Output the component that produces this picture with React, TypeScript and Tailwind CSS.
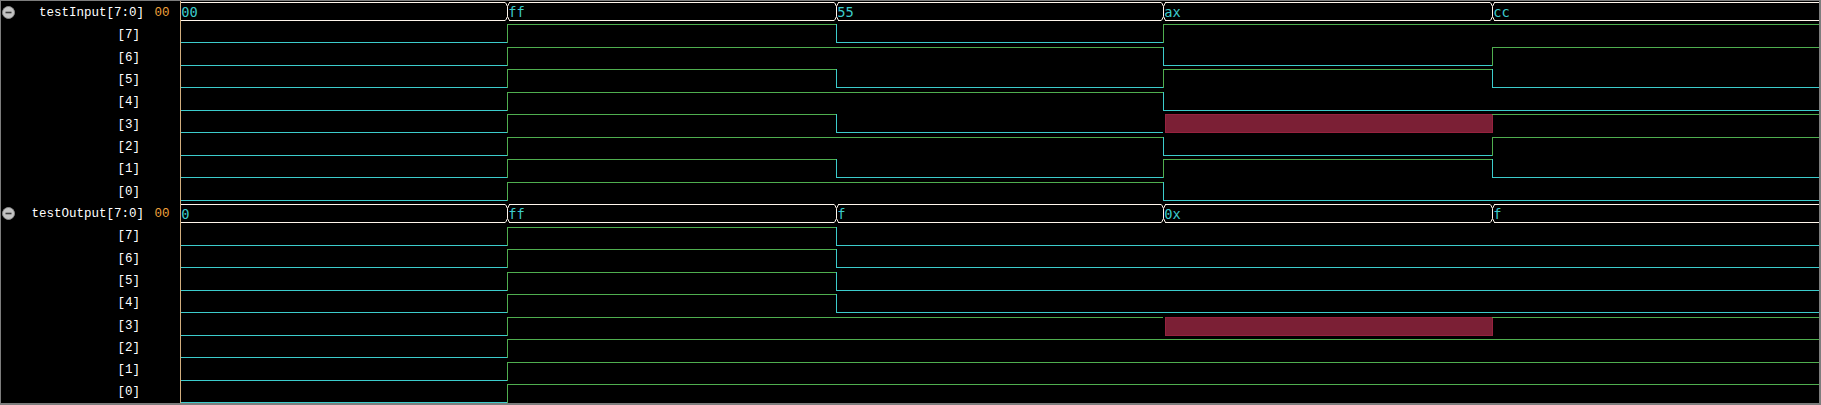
import React from "react";

type Bit = 0 | 1 | "x";

interface Signal {
  name: string;
  value: string;
  labels: string[];
  bits: Bit[][]; // per segment, bit7..bit0
}

// pixel columns where the value changes, and the visible wave span
const CHANGES = [507, 836, 1163, 1492];
const LEFT = 181;
const RIGHT = 1819;
const EDGES = [LEFT, ...CHANGES, RIGHT];

const HIGH = "#4fae4f";
const LOW = "#3ccccc";
const BUS = "#fff6ec";

const hi = (r: number) => Math.round(1.5 + 22.5 * r);
const lo = (r: number) => Math.round(19.5 + 22.5 * r);

const signals: Signal[] = [
  {
    name: "testInput[7:0]",
    value: "00",
    labels: ["00", "ff", "55", "ax", "cc"],
    bits: [
      [0, 0, 0, 0, 0, 0, 0, 0],
      [1, 1, 1, 1, 1, 1, 1, 1],
      [0, 1, 0, 1, 0, 1, 0, 1],
      [1, 0, 1, 0, "x", 0, 1, 0],
      [1, 1, 0, 0, 1, 1, 0, 0],
    ],
  },
  {
    name: "testOutput[7:0]",
    value: "00",
    labels: ["0", "ff", "f", "0x", "f"],
    bits: [
      [0, 0, 0, 0, 0, 0, 0, 0],
      [1, 1, 1, 1, 1, 1, 1, 1],
      [0, 0, 0, 0, 1, 1, 1, 1],
      [0, 0, 0, 0, "x", 1, 1, 1],
      [0, 0, 0, 0, 1, 1, 1, 1],
    ],
  },
];

const BusWave = ({ row, labels }: { row: number; labels: string[] }) => {
  const t = hi(row) + 0.5;
  const b = lo(row) + 0.5;
  return (
    <g>
      {EDGES.slice(0, -1).map((start, i) => {
        const end = EDGES[i + 1];
        const x0 = i === 0 ? start : start + 2;
        const x1 = i === EDGES.length - 2 ? end : end - 2;
        return (
          <g key={i}>
            <line x1={x0} y1={t} x2={x1} y2={t} stroke={BUS} />
            <line x1={x0} y1={b} x2={x1} y2={b} stroke={BUS} />
            <text
              x={i === 0 ? start + 0.3 : start + 1.2}
              y={hi(row) + 14.8}
              className="font-['DejaVu_Sans_Mono',monospace] text-[13.7px] fill-[#3ccccc]"
            >
              {labels[i]}
            </text>
          </g>
        );
      })}
      {CHANGES.map((c) => {
        const x = c + 0.5;
        return (
          <path
            key={c}
            d={`M${x - 2} ${t} L${x} ${t + 4} L${x} ${b - 4} L${x - 2} ${b} M${x + 2} ${t} L${x} ${t + 4} M${x + 2} ${b} L${x} ${b - 4}`}
            stroke={BUS}
            fill="none"
          />
        );
      })}
    </g>
  );
};

const BitWave = ({ row, vals }: { row: number; vals: Bit[] }) => {
  const t = hi(row);
  const b = lo(row);
  return (
    <g>
      {vals.map((v, i) => {
        const a = EDGES[i];
        const e = EDGES[i + 1];
        const prev = i > 0 ? vals[i - 1] : v;
        const parts: React.ReactNode[] = [];
        if (v === "x") {
          parts.push(
            <rect
              key="x"
              x={a + 2.5}
              y={t + 0.5}
              width={e - a - 2}
              height={b - t}
              fill="#7b1f35"
              stroke="#96223f"
            />
          );
        } else {
          const y = (v === 1 ? t : b) + 0.5;
          parts.push(
            <line key="h" x1={a} y1={y} x2={e} y2={y} stroke={v === 1 ? HIGH : LOW} />
          );
          if (prev !== v && prev !== "x") {
            parts.push(
              <line
                key="v"
                x1={a + 0.5}
                y1={t}
                x2={a + 0.5}
                y2={b + 1}
                stroke={v === 1 ? HIGH : LOW}
              />
            );
          }
        }
        return <g key={i}>{parts}</g>;
      })}
    </g>
  );
};

const MinusIcon = () => (
  <svg width="13" height="13" viewBox="0 0 13 13" className="block">
    <circle cx="6.5" cy="6.5" r="6" fill="#c4c4c4" stroke="#8c8c8c" />
    <line x1="3.5" y1="6.5" x2="9.5" y2="6.5" stroke="#3a3a3a" strokeWidth="1.6" />
  </svg>
);

export default function App() {
  return (
    <div className="w-[1821px] h-[405px] bg-black border-l border-t border-r-2 border-b-2 border-[#7d7d7d] flex font-['Liberation_Mono',monospace] text-[12.5px] text-white overflow-hidden">
      <div className="w-[179px] flex flex-col">
        {signals.map((s) => (
          <React.Fragment key={s.name}>
            <div className="h-[22.5px] grid grid-cols-[16px_1fr_36px] items-center">
              <div className="pl-[1px] pt-[1px]">
                <MinusIcon />
              </div>
              <span className="text-right leading-none pt-[2px]">{s.name}</span>
              <span className="pl-[10.5px] leading-none pt-[2px] text-[#f0a23c]">{s.value}</span>
            </div>
            {[7, 6, 5, 4, 3, 2, 1, 0].map((n) => (
              <div key={n} className="h-[22.5px] grid grid-cols-[16px_1fr_36px] items-center">
                <span />
                <span className="text-right pr-[4px] leading-none pt-[2px]">[{n}]</span>
                <span />
              </div>
            ))}
          </React.Fragment>
        ))}
      </div>
      <div className="flex-1 border-l border-[#d2ae7e]">
        <svg width="1638" height="402" viewBox="181 1 1638 402" className="block">
          {signals.map((s, si) => {
            const base = si * 9;
            return (
              <g key={s.name}>
                <BusWave row={base} labels={s.labels} />
                {[0, 1, 2, 3, 4, 5, 6, 7].map((k) => (
                  <BitWave key={k} row={base + 1 + k} vals={s.bits.map((seg) => seg[k])} />
                ))}
              </g>
            );
          })}
        </svg>
      </div>
    </div>
  );
}
